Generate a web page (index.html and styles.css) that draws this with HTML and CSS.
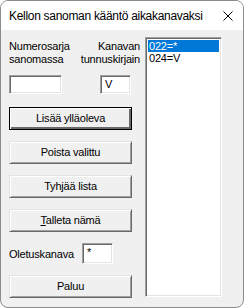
FILE: index.html
```html
<!DOCTYPE html>
<html lang="fi">
<head>
    <meta charset="UTF-8">
    <title>Kellon sanoman kääntö aikakanavaksi</title>
    <link rel="stylesheet" href="styles.css">
</head>
<body>
    <div class="window">
        <div class="titlebar">
            <span class="title">Kellon sanoman kääntö aikakanavaksi</span>
            <svg class="close" width="10" height="10" viewBox="0 0 10 10">
                <path d="M0.5 0.5 L9.5 9.5 M9.5 0.5 L0.5 9.5" stroke="#000" stroke-width="1" fill="none"/>
            </svg>
        </div>
        <div class="content">
            <div class="left">
                <div class="labels">
                    <div class="label">Numerosarja<br>sanomassa</div>
                    <div class="label right">Kanavan<br>tunnuskirjain</div>
                </div>
                <div class="inputs">
                    <div class="field num"></div>
                    <div class="field chan">V</div>
                </div>
                <div class="btn default">Lisää ylläoleva</div>
                <div class="btn">Poista valittu</div>
                <div class="btn">Tyhjää lista</div>
                <div class="btn"><u>T</u>alleta nämä</div>
                <div class="default-row">
                    <span>Oletuskanava</span>
                    <div class="field chan small">*</div>
                </div>
                <div class="btn">Paluu</div>
            </div>
            <div class="listbox">
                <div class="item selected">022=*</div>
                <div class="item">024=V</div>
            </div>
        </div>
    </div>
</body>
</html>
```

FILE: styles.css
```css
body {
    margin: 0;
    font-family: "Liberation Sans", Arial, sans-serif;
    font-size: 11px;
    letter-spacing: -0.2px;
    color: #000;
}

.window {
    width: 244px;
    height: 308px;
    box-sizing: border-box;
    border: 1px solid #8c8c8c;
    border-radius: 8px;
    overflow: hidden;
    background: #f0f0f0;
}

.titlebar {
    height: 29px;
    background: #fff;
    display: flex;
    align-items: center;
    justify-content: space-between;
    padding: 0 10px 0 8px;
}
.title {
    font-family: "Liberation Sans", Arial, sans-serif;
    font-size: 12px;
    letter-spacing: -0.3px;
    white-space: nowrap;
}

.content {
    display: flex;
    padding: 7px 0 0 8px;
}

.left {
    width: 123px;
}

.labels {
    display: flex;
    justify-content: space-between;
    margin: 3px -8px 0 0;
    line-height: 13px;
}
.label.right {
    text-align: right;
}

.inputs {
    display: flex;
    justify-content: space-between;
    margin-top: 9px;
    padding-right: 1px;
}

.field {
    box-sizing: border-box;
    height: 19px;
    background: #fff;
    border-style: solid;
    border-width: 1px;
    border-color: #a0a0a0 #fff #fff #a0a0a0;
    box-shadow: inset 1px 1px 0 #696969, inset -1px -1px 0 #e3e3e3;
    padding: 2px 0 0 4px;
    line-height: 13px;
}
.field.num {
    width: 53px;
}
.field.chan {
    width: 31px;
}

.btn {
    box-sizing: border-box;
    height: 23px;
    margin-top: 11px;
    border-style: solid;
    border-width: 1px;
    border-color: #e3e3e3 #696969 #696969 #e3e3e3;
    box-shadow: inset 1px 1px 0 #fff, inset -1px -1px 0 #a0a0a0;
    text-align: center;
    line-height: 20px;
}
.btn.default {
    border-color: #000;
    box-shadow: inset 1px 1px 0 #fff, inset -2px -2px 0 #696969, inset -1px -1px 0 #a0a0a0;
    margin-top: 13px;
}

.default-row {
    display: flex;
    align-items: center;
    margin-top: 11px;
}
.default-row span {
    margin-right: 8px;
}
.field.small {
    height: 21px;
}

.listbox {
    box-sizing: border-box;
    width: 77px;
    height: 260px;
    margin-left: 13px;
    background: #fff;
    border-style: solid;
    border-width: 1px;
    border-color: #a0a0a0 #fff #fff #a0a0a0;
    box-shadow: inset 1px 1px 0 #696969, inset -1px -1px 0 #e3e3e3;
    padding: 2px 2px 0 2px;
}
.item {
    height: 12px;
    line-height: 12px;
    padding-left: 1px;
}
.item.selected {
    background: #0078d7;
    color: #fff;
}
```
